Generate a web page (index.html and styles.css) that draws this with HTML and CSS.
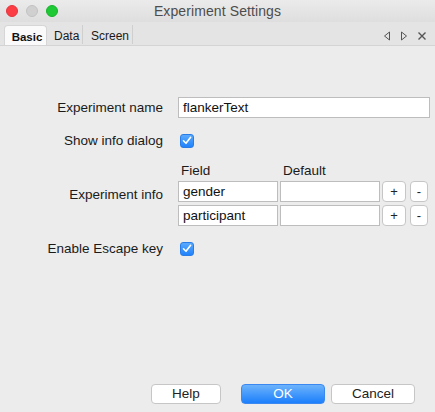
FILE: index.html
```html
<!DOCTYPE html>
<html>
<head>
<meta charset="utf-8">
<link rel="stylesheet" href="styles.css">
</head>
<body>
<div class="window">
  <div class="titlebar">
    <div class="lights">
      <span class="light red"></span>
      <span class="light gray"></span>
      <span class="light green"></span>
    </div>
    <div class="title">Experiment Settings</div>
  </div>
  <div class="tabbar">
    <div class="tabs">
      <div class="tab active">Basic</div>
      <div class="tab">Data</div>
      <div class="tab">Screen</div>
    </div>
    <div class="tabtools">
      <svg width="8" height="10" viewBox="0 0 8 10"><path d="M6.5 1 L1.5 5 L6.5 9 Z" fill="none" stroke="#555" stroke-width="1"/></svg>
      <svg width="8" height="10" viewBox="0 0 8 10"><path d="M1.5 1 L6.5 5 L1.5 9 Z" fill="none" stroke="#555" stroke-width="1"/></svg>
      <svg width="10" height="10" viewBox="0 0 10 10"><path d="M1.5 1.5 L8.5 8.5 M8.5 1.5 L1.5 8.5" stroke="#555" stroke-width="1.4"/></svg>
    </div>
  </div>
  <div class="content">
    <div class="form">
      <div class="label">Experiment name</div>
      <div class="input wide">flankerText</div>

      <div class="label">Show info dialog</div>
      <div class="ctrl"><span class="check"><svg width="10" height="9" viewBox="0 0 10 9"><path d="M1.5 4.8 L4 7.3 L8.6 1.3" fill="none" stroke="#fff" stroke-width="1.6" stroke-linecap="round" stroke-linejoin="round"/></svg></span></div>

      <div class="label">Experiment info</div>
      <div class="info">
        <div class="head">Field</div>
        <div class="head">Default</div>
        <div></div>
        <div></div>
        <div class="input">gender</div>
        <div class="input"></div>
        <div class="btn small">+</div>
        <div class="btn small minus">-</div>
        <div class="input">participant</div>
        <div class="input"></div>
        <div class="btn small">+</div>
        <div class="btn small minus">-</div>
      </div>

      <div class="label">Enable Escape key</div>
      <div class="ctrl"><span class="check"><svg width="10" height="9" viewBox="0 0 10 9"><path d="M1.5 4.8 L4 7.3 L8.6 1.3" fill="none" stroke="#fff" stroke-width="1.6" stroke-linecap="round" stroke-linejoin="round"/></svg></span></div>
    </div>
  </div>
  <div class="footer">
    <div class="btn push">Help</div>
    <div class="btn push primary">OK</div>
    <div class="btn push">Cancel</div>
  </div>
</div>
</body>
</html>
```

FILE: styles.css
```css
html, body {
  margin: 0;
  padding: 0;
}
body {
  font-family: "Liberation Sans", Arial, sans-serif;
  font-size: 13.5px;
  color: #1a1a1a;
  background: #ececec;
}
.window {
  width: 435px;
  height: 412px;
  display: flex;
  flex-direction: column;
  background: #ececec;
  overflow: hidden;
}
.titlebar {
  height: 22px;
  flex: none;
  display: flex;
  align-items: center;
  justify-content: center;
  position: relative;
  background: linear-gradient(#ebebeb, #dedede);
}
.lights {
  position: absolute;
  left: 6px;
  top: 5px;
  display: flex;
  gap: 8px;
}
.light {
  width: 12px;
  height: 12px;
  border-radius: 50%;
  box-sizing: border-box;
}
.light.red { background: #fc3d44; border: 1px solid #e2373e; }
.light.gray { background: #d0d0d0; border: 1px solid #c2c2c2; }
.light.green { background: #1dc934; border: 1px solid #18b22c; }
.title {
  font-size: 14px;
  color: #4d4d4d;
  letter-spacing: 0.1px;
}
.tabbar {
  height: 23px;
  flex: none;
  display: flex;
  justify-content: space-between;
  align-items: flex-end;
  background: #e4e4e4;
  border-bottom: 1px solid #d4d4d4;
}
.tabs {
  display: flex;
  align-items: flex-end;
  padding-left: 4px;
  height: 100%;
}
.tab {
  font-size: 12px;
  height: 19px;
  line-height: 18px;
  padding-top: 2px;
  margin-bottom: 1px;
  color: #1a1a1a;
  border-right: 1px solid #cfcfcf;
  box-sizing: border-box;
}
.tab.active {
  background: #fafafa;
  font-weight: bold;
  font-size: 11.5px;
  color: #111;
  border: 1px solid #d6d6d6;
  border-bottom: none;
  border-radius: 4px 4px 0 0;
  padding: 2px 0 0 3px;
  height: 20px;
  margin-bottom: 0;
  width: 43px;
  text-align: center;
}
.tab:nth-child(2) {
  width: 36px;
  padding-left: 7px;
}
.tab:nth-child(3) {
  width: 50px;
  padding-left: 8px;
}
.tabtools {
  display: flex;
  align-items: center;
  gap: 9px;
  padding-right: 8px;
  height: 100%;
  padding-top: 4px;
  box-sizing: border-box;
}
.content {
  flex: 1;
}
.form {
  display: grid;
  grid-template-columns: 163px 252px;
  column-gap: 15px;
  row-gap: 15px;
  margin-top: 51px;
  align-items: center;
}
.label {
  text-align: right;
}
.ctrl {
  display: flex;
  align-items: center;
  padding-left: 2px;
}
.check {
  width: 14px;
  height: 14px;
  border-radius: 3px;
  background: linear-gradient(#5aa9fd, #2183fb);
  box-sizing: border-box;
  border: 1px solid #2a7de6;
  display: flex;
  align-items: center;
  justify-content: center;
}
.input {
  height: 21px;
  box-sizing: border-box;
  border: 1px solid #bdbdbd;
  background: #fff;
  padding: 0 4px;
  line-height: 19px;
  color: #111;
}
.info {
  display: grid;
  grid-template-columns: 100px 100px 24px 20px;
  column-gap: 2px;
  row-gap: 3px;
}
.info .btn.minus { margin-left: 2px; }
.info > :nth-child(4) { margin-left: 2px; }
.head {
  padding-left: 3px;
  line-height: 16px;
  height: 16px;
  margin-bottom: -1px;
}
.btn {
  box-sizing: border-box;
  background: #fff;
  border: 1px solid #c6c6c6;
  border-radius: 4px;
  text-align: center;
  color: #222;
}
.btn.small {
  height: 21px;
  line-height: 19px;
  font-size: 13px;
}
.footer {
  flex: none;
  display: flex;
  justify-content: flex-end;
  padding: 0 20px 8px 0;
  gap: 6px;
}
.btn.push {
  height: 20px;
  line-height: 18px;
  width: 84px;
}
.btn.push:first-child {
  width: 70px;
  margin-right: 14px;
}
.btn.primary {
  background: linear-gradient(#6cb3fb, #1c7ffb);
  border-color: #3b89f0;
  color: #fff;
}
```
